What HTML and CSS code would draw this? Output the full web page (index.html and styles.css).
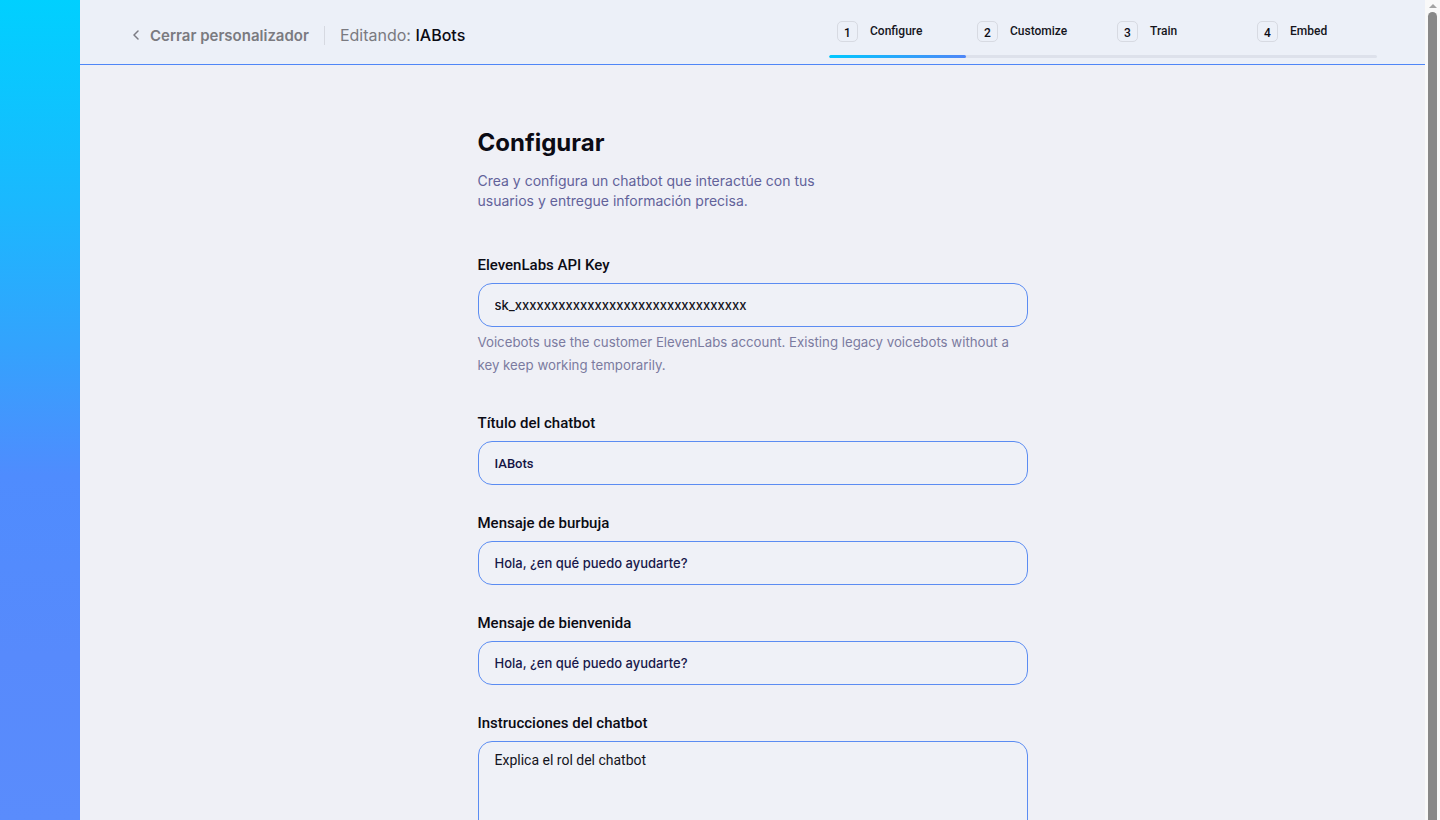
FILE: index.html
```html
<!DOCTYPE html>
<html lang="es">
<head>
  <meta charset="UTF-8">
  <title>Editando: IABots</title>
  <link rel="stylesheet" href="styles.css">
</head>
<body>

<div class="app">
  <aside class="sidebar"></aside>

  <div class="main">
    <header class="topbar">
      <div class="topbar-left">
        <a class="back-link" href="#">
          <svg width="8" height="10" viewBox="0 0 8 10"><polyline points="6,1 2,5 6,9" fill="none" stroke="#7c7c84" stroke-width="1.5" stroke-linecap="round" stroke-linejoin="round"/></svg>
          <span>Cerrar personalizador</span>
        </a>
        <span class="divider"></span>
        <span class="editing">Editando: <strong>IABots</strong></span>
      </div>

      <div class="stepper">
        <div class="steps">
          <div class="step"><span class="step-num">1</span><span class="step-label">Configure</span></div>
          <div class="step"><span class="step-num">2</span><span class="step-label">Customize</span></div>
          <div class="step"><span class="step-num">3</span><span class="step-label">Train</span></div>
          <div class="step"><span class="step-num">4</span><span class="step-label">Embed</span></div>
        </div>
        <div class="progress"><div class="progress-fill" style="width:25%"></div></div>
      </div>
    </header>

    <main class="content">
      <div class="intro">
        <h1>Configurar</h1>
        <p>Crea y configura un chatbot que interactúe con tus usuarios y entregue información precisa.</p>
      </div>

      <div class="field">
        <label>ElevenLabs API Key</label>
        <input class="input" value="sk_xxxxxxxxxxxxxxxxxxxxxxxxxxxxxxxx">
        <p class="hint">Voicebots use the customer ElevenLabs account. Existing legacy voicebots without a key keep working temporarily.</p>
      </div>

      <div class="field">
        <label>Título del chatbot</label>
        <input class="input alt" value="IABots">
      </div>

      <div class="field">
        <label>Mensaje de burbuja</label>
        <input class="input navy" value="Hola, ¿en qué puedo ayudarte?">
      </div>

      <div class="field">
        <label>Mensaje de bienvenida</label>
        <input class="input navy" value="Hola, ¿en qué puedo ayudarte?">
      </div>

      <div class="field">
        <label>Instrucciones del chatbot</label>
        <textarea class="input textarea">Explica el rol del chatbot</textarea>
      </div>
    </main>
  </div>

  <div class="scrollbar">
    <span class="scroll-up"></span>
    <div class="scroll-thumb"></div>
  </div>
</div>

</body>
</html>
```

FILE: styles.css
```css
body {
  margin: 0;
  font-family: Inter, "Noto Sans", sans-serif;
  background: #eff0f6;
  color: #0b0b14;
}

.app { display: flex; align-items: flex-start; }

.sidebar {
  width: 80px;
  flex-shrink: 0;
  height: 100vh;
  position: sticky;
  top: 0;
  background: linear-gradient(180deg, #00d0ff 0%, #1bb8fe 25%, #33a3fd 42%, #4f8cfe 58%, #578afc 80%, #5a8cfc 100%);
}

.main { flex: 1; min-width: 0; }

/* page scrollbar column */
.scrollbar {
  width: 15px;
  flex-shrink: 0;
  height: 100vh;
  position: sticky;
  top: 0;
  background: #f9f9f9;
  display: flex;
  flex-direction: column;
  align-items: center;
}
.scroll-up {
  margin: 4px 0 4px;
  width: 0;
  height: 0;
  border-left: 4px solid transparent;
  border-right: 4px solid transparent;
  border-bottom: 4px solid #a3a3a3;
}
.scroll-thumb {
  width: 9px;
  flex: 1;
  background: #888;
  border-radius: 5px 5px 0 0;
}

/* header */
.topbar {
  height: 64px;
  display: flex;
  justify-content: space-between;
  padding: 0 48px 0 52px;
  background: #ecf0f8;
  border-bottom: 1px solid #4f86f7;
}
.topbar-left {
  display: flex;
  align-items: center;
  padding-top: 6px;
}
.back-link {
  display: flex;
  align-items: center;
  gap: 10px;
  text-decoration: none;
  color: #7a7a80;
  font-size: 15px;
  font-weight: 600;
}
.divider {
  width: 1px;
  height: 19px;
  background: #d6d9e1;
  margin: 0 15px;
}
.editing { color: #7a7a80; font-size: 16px; }
.editing strong { color: #0b0b14; font-weight: 500; }

.stepper { width: 548px; padding-top: 21px; }
.steps { display: grid; grid-template-columns: repeat(4, 140px); }
.step {
  display: flex;
  align-items: center;
  gap: 12px;
  padding-left: 8px;
}
.step-num {
  width: 19px;
  border: 1px solid #d7dae2;
  border-radius: 5px;
  display: flex;
  align-items: center;
  justify-content: center;
  font-family: Roboto, sans-serif;
  font-size: 12px;
  font-weight: 500;
  padding-top: 2px;
  height: 17px;
}
.step-label {
  font-family: Roboto, sans-serif;
  font-size: 12px;
  font-weight: 500;
  color: #15151c;
  margin-top: -1px;
}
.progress {
  height: 3px;
  margin-top: 13px;
  background: #dde1eb;
  border-radius: 2px;
  overflow: hidden;
}
.progress-fill {
  height: 100%;
  background: linear-gradient(90deg, #00c8ff, #4f86f7);
  border-radius: 2px;
}

/* form */
.content {
  width: 550px;
  margin: 0 auto;
  padding: 63px 0 20px;
}
.intro { margin-bottom: 45px; }
.intro h1 {
  margin: 0;
  font-size: 24px;
  line-height: 30px;
  font-weight: 700;
}
.intro p {
  margin: 13px 0 0;
  max-width: 360px;
  font-size: 14px;
  line-height: 20px;
  color: #62629a;
}

.field { margin-bottom: 29px; }
.field label {
  display: block;
  font-family: Roboto, sans-serif;
  font-size: 15px;
  font-weight: 500;
  line-height: 18px;
  margin-bottom: 9px;
  color: #0b0b14;
}
.input {
  display: block;
  width: 100%;
  box-sizing: border-box;
  height: 44px;
  padding: 0 16px;
  border: 1px solid #5b8cf2;
  border-radius: 14px;
  background: #eff1f7;
  font-family: Inter, sans-serif;
  font-size: 13px;
  font-weight: 500;
  color: #14141c;
  outline: none;
}
.input.alt { font-family: Roboto, sans-serif; color: #141444; }
.input.navy { color: #18184a; }
.textarea {
  height: 100px;
  padding: 9px 16px;
  resize: none;
  font-family: Roboto, sans-serif;
  font-weight: 400;
  font-size: 14px;
  line-height: 18px;
  border-bottom-left-radius: 0;
  border-bottom-right-radius: 0;
}
.hint {
  margin: 4px 0 0;
  padding-bottom: 8px;
  max-width: 540px;
  font-size: 13.25px;
  line-height: 23px;
  color: #7b7ba0;
}
```
